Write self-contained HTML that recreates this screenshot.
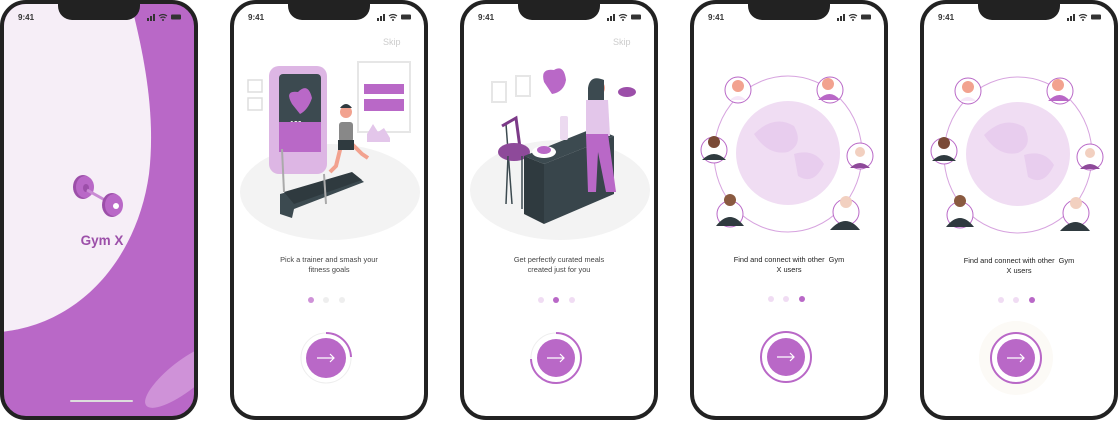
<!DOCTYPE html>
<html><head><meta charset="utf-8"><style>
*{margin:0;padding:0;box-sizing:border-box}
body{width:1118px;height:421px;background:#fff;position:relative;overflow:hidden;font-family:"Liberation Sans",sans-serif}
.ph{position:absolute;top:0;width:198px;height:420px;border:4px solid #222;border-radius:26px;overflow:hidden;background:#fff}
.notch{position:absolute;left:54px;top:-4px;width:82px;height:20px;background:#222;border-radius:0 0 14px 14px;z-index:5}
.time{position:absolute;left:14px;top:9px;font-size:8px;font-weight:bold;color:#333;z-index:5}
.st{position:absolute;right:12px;top:9px;z-index:5}
.skip{position:absolute;left:149px;top:33px;font-size:9px;color:#ccc}
.txt{position:absolute;left:0;width:190px;text-align:center;font-size:7.4px;line-height:10px;color:#444}
.dot{position:absolute;width:6px;height:6px;border-radius:50%}
svg{position:absolute;left:0;top:0}
</style></head><body>

<!-- phone 1 -->
<div class="ph" style="left:0;background:#b968c7">
<svg width="190" height="412" viewBox="0 0 190 412">
<path d="M0,-4 L126,-4 C140,50 152,110 145,170 C134,250 80,320 -4,328 Z" fill="#f6eef7"/>
<ellipse cx="180" cy="372" rx="48" ry="15" transform="rotate(-38 180 372)" fill="#cf92d8"/>
<rect x="66" y="396" width="63" height="2" rx="1" fill="#ddd"/>
<g>
<ellipse cx="79" cy="183" rx="10" ry="12" fill="#9c4fa9"/>
<ellipse cx="81" cy="183" rx="9" ry="11" fill="#b968c7"/>
<ellipse cx="82" cy="184" rx="3" ry="4" fill="#9c4fa9"/>
<line x1="83" y1="186" x2="108" y2="200" stroke="#c98bd4" stroke-width="3"/>
<ellipse cx="108" cy="201" rx="10" ry="12" fill="#9c4fa9"/>
<ellipse cx="110" cy="201" rx="9" ry="11" fill="#b968c7"/>
<ellipse cx="112" cy="202" rx="3" ry="3" fill="#fff"/>
</g>
<text x="98" y="241" text-anchor="middle" font-size="13.5" font-weight="bold" fill="#9c4fa9" font-family="Liberation Sans">Gym X</text>
</svg>
<div class="notch"></div><div class="time">9:41</div>
<svg class="st" style="left:143px;top:9px" width="36" height="8"><rect x="0" y="5" width="2" height="3" fill="#333"/><rect x="3" y="3" width="2" height="5" fill="#333"/><rect x="6" y="1" width="2" height="7" fill="#333"/><path d="M12,3 Q16,0 20,3 M13.5,5 Q16,3 18.5,5" stroke="#333" fill="none" stroke-width="1.2"/><circle cx="16" cy="7" r="1" fill="#333"/><rect x="24" y="1.5" width="10" height="5" rx="1" fill="#333"/></svg>
</div>

<!-- phone 2 -->
<div class="ph" style="left:230px">
<div class="notch"></div><div class="time">9:41</div>
<svg class="st" style="left:143px;top:9px" width="36" height="8"><rect x="0" y="5" width="2" height="3" fill="#333"/><rect x="3" y="3" width="2" height="5" fill="#333"/><rect x="6" y="1" width="2" height="7" fill="#333"/><path d="M12,3 Q16,0 20,3 M13.5,5 Q16,3 18.5,5" stroke="#333" fill="none" stroke-width="1.2"/><circle cx="16" cy="7" r="1" fill="#333"/><rect x="24" y="1.5" width="10" height="5" rx="1" fill="#333"/></svg>
<div class="skip">Skip</div>
<svg width="190" height="412" viewBox="0 0 190 412">
<ellipse cx="96" cy="188" rx="90" ry="48" fill="#f3f3f3"/>
<rect x="14" y="76" width="14" height="12" fill="none" stroke="#ddd" stroke-width="1.5"/>
<rect x="14" y="94" width="14" height="12" fill="none" stroke="#ddd" stroke-width="1.5"/>
<rect x="35" y="62" width="58" height="108" rx="10" fill="#ddb6e4"/>
<rect x="45" y="70" width="42" height="70" rx="4" fill="#3c4a50"/>
<path d="M58,100 q-8,-14 6,-12 q10,-10 14,6 q-4,12 -12,16 z" fill="#b968c7"/>
<text x="56" y="122" font-size="7" fill="#fff" font-weight="bold">120</text>
<rect x="45" y="118" width="42" height="30" fill="#b968c7"/>
<rect x="124" y="58" width="52" height="70" fill="none" stroke="#e6e6e6" stroke-width="2"/>
<rect x="130" y="80" width="40" height="10" fill="#b968c7"/>
<rect x="130" y="95" width="40" height="12" fill="#b968c7"/>
<path d="M133,130 l6,-10 l5,8 l6,-4 l6,10 v4 h-23 z" fill="#e3c6ea"/>
<polygon points="46,190 120,170 130,178 60,205 58,214 46,210" fill="#3c4a50"/>
<polygon points="50,188 118,168 128,176 60,200" fill="#2f3a3f"/>
<line x1="48" y1="145" x2="50" y2="188" stroke="#aaa" stroke-width="2"/>
<line x1="90" y1="170" x2="92" y2="200" stroke="#aaa" stroke-width="2"/>
<circle cx="112" cy="108" r="6" fill="#f2a28f"/>
<path d="M106,104 q6,-8 12,0" fill="#2f3a3f"/>
<rect x="105" y="118" width="14" height="20" rx="3" fill="#888"/>
<path d="M108,138 l-6,24 l-6,6 M116,138 l12,12 l6,4" stroke="#f2a28f" stroke-width="4" fill="none"/>
<rect x="104" y="136" width="16" height="10" fill="#2f3a3f"/>
</svg>
<div class="txt" style="top:251px">Pick a trainer and smash your<br>fitness goals</div>
<div class="dot" style="left:74px;top:293px;background:#cf92d8"></div>
<div class="dot" style="left:89px;top:293px;background:#eee"></div>
<div class="dot" style="left:105px;top:293px;background:#eee"></div>
<svg width="190" height="412" viewBox="0 0 190 412">
<circle cx="92" cy="354" r="25" fill="none" stroke="#eee" stroke-width="1"/>
<path d="M92,329 A25,25 0 0 1 117,353" fill="none" stroke="#b968c7" stroke-width="2"/>
<circle cx="92" cy="354" r="20" fill="#b968c7"/>
<path d="M83,354 H100 M96,350 L100,354 L96,358" stroke="#fff" stroke-width="1.2" fill="none"/>
</svg>
</div>

<!-- phone 3 -->
<div class="ph" style="left:460px">
<div class="notch"></div><div class="time">9:41</div>
<svg class="st" style="left:143px;top:9px" width="36" height="8"><rect x="0" y="5" width="2" height="3" fill="#333"/><rect x="3" y="3" width="2" height="5" fill="#333"/><rect x="6" y="1" width="2" height="7" fill="#333"/><path d="M12,3 Q16,0 20,3 M13.5,5 Q16,3 18.5,5" stroke="#333" fill="none" stroke-width="1.2"/><circle cx="16" cy="7" r="1" fill="#333"/><rect x="24" y="1.5" width="10" height="5" rx="1" fill="#333"/></svg>
<div class="skip">Skip</div>
<svg width="190" height="412" viewBox="0 0 190 412">
<ellipse cx="96" cy="186" rx="90" ry="50" fill="#f3f3f3"/>
<rect x="28" y="78" width="14" height="20" fill="none" stroke="#e6e6e6" stroke-width="2"/>
<rect x="52" y="72" width="14" height="20" fill="none" stroke="#e6e6e6" stroke-width="2"/>
<path d="M80,78 q-4,-14 10,-12 q10,-6 12,10 q-2,12 -14,14 z" fill="#b968c7"/>
<line x1="42" y1="120" x2="48" y2="200" stroke="#3c4a50" stroke-width="1.5"/>
<path d="M38,122 l14,-8 l4,30" stroke="#7c3a88" stroke-width="3" fill="none"/>
<ellipse cx="50" cy="148" rx="16" ry="9" fill="#8e4a9a"/>
<line x1="44" y1="152" x2="42" y2="200" stroke="#3c4a50" stroke-width="1.5"/>
<line x1="58" y1="152" x2="58" y2="205" stroke="#3c4a50" stroke-width="1.5"/>
<polygon points="60,152 130,124 150,132 80,160" fill="#3c4a50"/>
<polygon points="60,152 80,160 80,220 60,210" fill="#2f3a3f"/>
<polygon points="80,160 150,132 150,190 80,220" fill="#38454b"/>
<ellipse cx="80" cy="148" rx="12" ry="6" fill="#fff"/>
<ellipse cx="80" cy="146" rx="7" ry="4" fill="#b968c7"/>
<rect x="96" y="112" width="8" height="24" rx="2" fill="#ecdaf0"/>
<circle cx="133" cy="84" r="8" fill="#f2a28f"/>
<path d="M124,84 q2,-14 16,-8 v30 h-16 z" fill="#3c4a50"/>
<path d="M122,96 h22 l2,36 h-24 z" fill="#e3c6ea"/>
<path d="M122,130 h22 l8,58 h-10 l-8,-40 l-2,40 h-8 z" fill="#b968c7"/>
<ellipse cx="163" cy="88" rx="9" ry="5" fill="#9c4fa9"/>
</svg>
<div class="txt" style="top:251px">Get perfectly curated meals<br>created just for you</div>
<div class="dot" style="left:74px;top:293px;background:#f0dcf3"></div>
<div class="dot" style="left:89px;top:293px;background:#b968c7"></div>
<div class="dot" style="left:105px;top:293px;background:#f0dcf3"></div>
<svg width="190" height="412" viewBox="0 0 190 412">
<circle cx="92" cy="354" r="25" fill="none" stroke="#eee" stroke-width="1"/>
<path d="M92,329 A25,25 0 1 1 67,355" fill="none" stroke="#b968c7" stroke-width="2"/>
<circle cx="92" cy="354" r="19" fill="#b968c7"/>
<path d="M83,354 H100 M96,350 L100,354 L96,358" stroke="#fff" stroke-width="1.2" fill="none"/>
</svg>
</div>

<!-- phone 4 & 5 -->
<div class="ph" style="left:690px">
<div class="notch"></div><div class="time">9:41</div>
<svg class="st" style="left:143px;top:9px" width="36" height="8"><rect x="0" y="5" width="2" height="3" fill="#333"/><rect x="3" y="3" width="2" height="5" fill="#333"/><rect x="6" y="1" width="2" height="7" fill="#333"/><path d="M12,3 Q16,0 20,3 M13.5,5 Q16,3 18.5,5" stroke="#333" fill="none" stroke-width="1.2"/><circle cx="16" cy="7" r="1" fill="#333"/><rect x="24" y="1.5" width="10" height="5" rx="1" fill="#333"/></svg>
<svg width="190" height="412" viewBox="0 0 190 412">
<g id="globe">
<ellipse cx="94" cy="150" rx="74" ry="78" fill="none" stroke="#d7a4df" stroke-width="1"/>
<circle cx="94" cy="149" r="52" fill="#f0ddf3"/>
<path d="M60,130 q20,-20 40,-8 q10,18 -6,26 q-20,4 -34,-18 z M100,150 q20,-6 30,10 q-10,22 -26,12 z" fill="#e8cdee"/>
<circle cx="44" cy="86" r="13" fill="#fff" stroke="#b968c7"/><circle cx="44" cy="82" r="6" fill="#f2a28f"/><path d="M36,96 q8,-8 16,0" fill="#f6e6f8"/>
<circle cx="136" cy="86" r="13" fill="#fff" stroke="#b968c7"/><circle cx="134" cy="80" r="6" fill="#f2a28f"/><path d="M124,96 q12,-12 22,0" fill="#b968c7"/>
<circle cx="20" cy="146" r="13" fill="#fff" stroke="#b968c7"/><circle cx="20" cy="138" r="6" fill="#7a4a36"/><path d="M8,156 q12,-12 24,0" fill="#2f3a3f"/>
<circle cx="166" cy="152" r="13" fill="#fff" stroke="#b968c7"/><circle cx="166" cy="148" r="5" fill="#f2d0c0"/><path d="M156,164 q10,-10 20,0" fill="#8e4a9a"/>
<circle cx="36" cy="210" r="13" fill="#fff" stroke="#b968c7"/><circle cx="36" cy="196" r="6" fill="#8a5a40"/><path d="M22,222 q14,-18 28,0" fill="#2f3a3f"/>
<circle cx="152" cy="208" r="13" fill="#fff" stroke="#b968c7"/><circle cx="152" cy="198" r="6" fill="#f2d0c0"/><path d="M136,226 q16,-18 30,0" fill="#2f3a3f"/>
</g>
</svg>
<div class="txt" style="top:251px;color:#222">Find and connect with other &nbsp;Gym<br>X users</div>
<div class="dot" style="left:74px;top:292px;background:#f0dcf3"></div>
<div class="dot" style="left:89px;top:292px;background:#f0dcf3"></div>
<div class="dot" style="left:105px;top:292px;background:#b968c7"></div>
<svg width="190" height="412" viewBox="0 0 190 412">
<circle cx="92" cy="353" r="25" fill="none" stroke="#b968c7" stroke-width="2"/>
<circle cx="92" cy="353" r="19" fill="#b968c7"/>
<path d="M83,353 H100 M96,349 L100,353 L96,357" stroke="#fff" stroke-width="1.2" fill="none"/>
</svg>
</div>

<div class="ph" style="left:920px">
<div class="notch"></div><div class="time">9:41</div>
<svg class="st" style="left:143px;top:9px" width="36" height="8"><rect x="0" y="5" width="2" height="3" fill="#333"/><rect x="3" y="3" width="2" height="5" fill="#333"/><rect x="6" y="1" width="2" height="7" fill="#333"/><path d="M12,3 Q16,0 20,3 M13.5,5 Q16,3 18.5,5" stroke="#333" fill="none" stroke-width="1.2"/><circle cx="16" cy="7" r="1" fill="#333"/><rect x="24" y="1.5" width="10" height="5" rx="1" fill="#333"/></svg>
<svg width="190" height="412" viewBox="0 0 190 412"><use href="#globe" transform="translate(0,1)"/></svg>
<div class="txt" style="top:252px;color:#222">Find and connect with other &nbsp;Gym<br>X users</div>
<div class="dot" style="left:74px;top:293px;background:#f0dcf3"></div>
<div class="dot" style="left:89px;top:293px;background:#f0dcf3"></div>
<div class="dot" style="left:105px;top:293px;background:#b968c7"></div>
<svg width="190" height="412" viewBox="0 0 190 412">
<circle cx="92" cy="354" r="37" fill="#fcfaf6"/>
<circle cx="92" cy="354" r="25" fill="#fff" stroke="#b968c7" stroke-width="2"/>
<circle cx="92" cy="354" r="19" fill="#b968c7"/>
<path d="M83,354 H100 M96,350 L100,354 L96,358" stroke="#fff" stroke-width="1.2" fill="none"/>
</svg>
</div>
</body></html>
